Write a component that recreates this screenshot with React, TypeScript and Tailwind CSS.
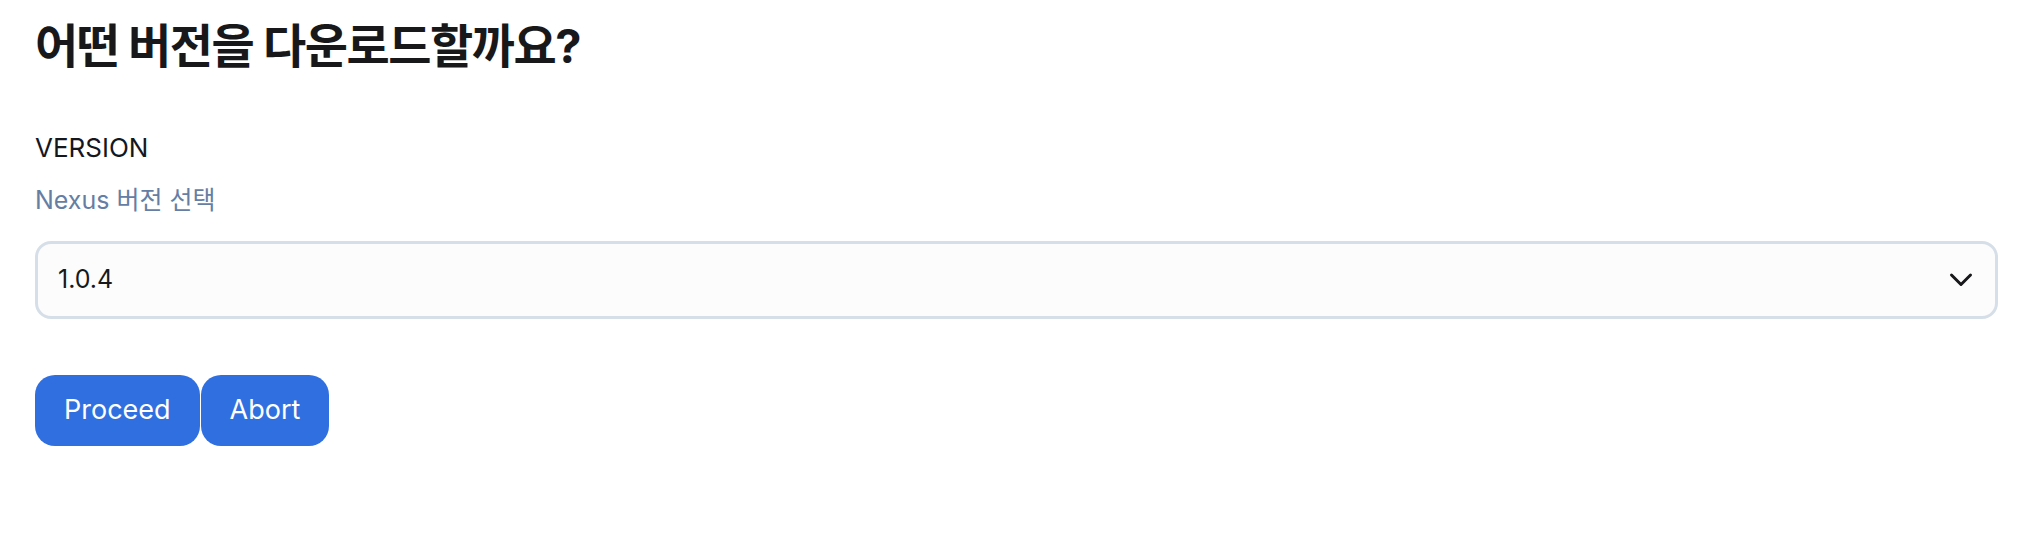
import React from "react";

export default function App() {
  return (
    <div className="min-h-screen bg-white pl-[35px] pr-[44px] pt-[18px]">
      <h1 className="text-[47px] leading-[56px] font-bold text-[#18181b] tracking-[-1.5px] [font-family:Inter,'Noto_Sans_CJK_KR',sans-serif]">
        어떤 버전을 다운로드할까요?
      </h1>
      <div className="mt-[58px] text-[26px] leading-[32px] text-[#16161d] [font-family:Inter,'Noto_Sans_CJK_KR',sans-serif]">
        VERSION
      </div>
      <div className="mt-[20px] text-[25px] leading-[32px] text-[#667ea3] [font-family:Inter,'Noto_Sans_CJK_KR',sans-serif]">
        Nexus 버전 선택
      </div>
      <div className="mt-[25px] flex h-[78px] items-center justify-between rounded-[16px] border-[3px] border-[#d6dee7] bg-[#fcfcfd] pl-[20px] pr-[22px] [font-family:Inter,sans-serif]">
        <span className="text-[25px] text-[#18181b]">1.0.4</span>
        <svg width="24" height="16" viewBox="0 0 24 16" fill="none">
          <path d="M2.5 3 L12 12.5 L21.5 3" stroke="#18181b" strokeWidth="3" strokeLinecap="round" strokeLinejoin="round" />
        </svg>
      </div>
      <div className="mt-[56px] flex [font-family:Inter,sans-serif]">
        <button className="h-[71px] rounded-[20px] bg-[#306fdf] px-[29px] text-[27px] text-white">Proceed</button>
        <button className="ml-[1px] h-[71px] rounded-[20px] bg-[#306fdf] px-[29px] text-[27px] text-white">Abort</button>
      </div>
    </div>
  );
}
